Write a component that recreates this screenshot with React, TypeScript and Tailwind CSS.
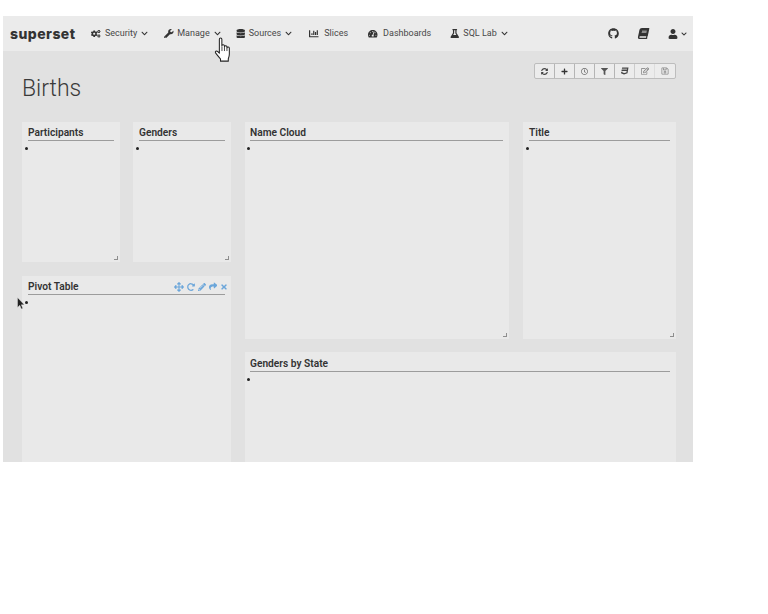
import React from 'react';
import {
  FaCogs, FaWrench, FaDatabase, FaChartBar, FaTachometerAlt, FaFlask, FaChevronDown, FaGithub, FaBook, FaUser,
  FaSyncAlt, FaPlus, FaRegClock, FaFilter, FaCss3, FaRegEdit, FaRegSave, FaArrowsAlt, FaRedoAlt, FaPencilAlt, FaShare, FaTimes,
} from 'react-icons/fa';

const FONT = "font-['Roboto',sans-serif]";

function NavItem({ icon, label, caret, className, iconGap = 'mr-[4px]' }: { icon: React.ReactNode; label: string; caret?: boolean; className: string; iconGap?: string }) {
  return (
    <div className={`flex items-center text-[9px] text-[#484848] ${className}`}>
      <span className={`${iconGap} flex w-[10px] justify-center text-[#333] text-[9.5px]`}>{icon}</span>
      <span>{label}</span>
      {caret && <FaChevronDown className="ml-[4px] text-[7px] text-[#333]" />}
    </div>
  );
}

function Panel({ title, className, tools }: { title: string; className: string; tools?: boolean }) {
  return (
    <div className={`relative bg-[#e9e9e9] px-[6px] pt-[5px] ${className}`}>
      <div className="flex h-[14px] items-center justify-between border-b border-[#9c9c9c] pb-[1px]">
        <span className="text-[10.2px] font-semibold text-[#333] leading-none">{title}</span>
        {tools && (
          <div className="-mr-[3px] -mt-[1px] flex items-center gap-[3px] text-[9px] text-[#6ba6da]">
            <FaArrowsAlt className="text-[10px]" />
            <FaRedoAlt className="text-[8px]" />
            <FaPencilAlt className="text-[8px]" />
            <FaShare className="text-[8.5px]" />
            <FaTimes className="text-[8px]" />
          </div>
        )}
      </div>
      <div className="-ml-[3px] mt-[6px] h-[3px] w-[3px] rounded-full bg-[#222]" />
    </div>
  );
}

function Resize() {
  return <div className="absolute bottom-[2px] right-[2px] h-[4px] w-[4px] border-b border-r border-[#8e8e8e]" />;
}

const TOOLS = [
  <FaSyncAlt className="text-[7px] text-[#444]" />,
  <FaPlus className="text-[7px] text-[#333]" />,
  <FaRegClock className="text-[7px] text-[#666]" />,
  <FaFilter className="text-[7px] text-[#555]" />,
  <FaCss3 className="text-[8px] text-[#444]" />,
  <FaRegEdit className="text-[8px] text-[#777]" />,
  <FaRegSave className="text-[8px] text-[#888]" />,
];

export default function App() {
  return (
    <div className={`relative h-[614px] w-[768px] overflow-hidden bg-white pl-[3px] pt-[16px] ${FONT}`}>
      <div className="h-[446px] w-[690px] overflow-hidden bg-[#e1e1e1]">
        {/* navbar */}
        <div className="flex h-[35px] items-center bg-[#ebebeb]">
          <span className="ml-[7px] w-[65px] font-['Inter',sans-serif] text-[14px] font-extrabold tracking-[0.45px] text-[#333]">superset</span>
          <NavItem className="ml-[16px]" icon={<FaCogs />} label="Security" caret />
          <NavItem className="ml-[16px]" iconGap="mr-[3px]" icon={<FaWrench />} label="Manage" caret />
          <NavItem className="ml-[15px]" iconGap="mr-[3px]" icon={<FaDatabase />} label="Sources" caret />
          <NavItem className="ml-[17px]" iconGap="mr-[5px]" icon={<FaChartBar />} label="Slices" />
          <NavItem className="ml-[20px]" iconGap="mr-[5px]" icon={<FaTachometerAlt />} label="Dashboards" />
          <NavItem className="ml-[18px]" icon={<FaFlask />} label="SQL Lab" caret />
          <div className="ml-auto mr-[6px] flex items-center text-[#333]">
            <FaGithub className="text-[11px]" />
            <FaBook className="ml-[19px] -skew-x-12 text-[11px]" />
            <FaUser className="ml-[19px] text-[10px]" />
            <FaChevronDown className="ml-[3px] text-[6px]" />
          </div>
        </div>

        <div className="px-[19px]">
          {/* title + toolbar */}
          <div className="flex h-[71px] items-start justify-between">
            <h1 className="mt-[26px] text-[23px] font-light leading-none text-[#3a3a3a]">Births</h1>
            <div className="mr-[-2px] mt-[12px] flex h-[16px] items-stretch rounded-[2px] border border-[#bdbdbd] bg-[#ececec]">
              {TOOLS.map((t, i) => (
                <div key={i} className={`flex w-[20px] items-center justify-center ${i < 4 ? 'border-r border-[#b5b5b5]' : i === 4 ? 'border-r border-[#cccccc]' : i === 5 ? 'border-r border-[#dddddd]' : ''}`}>
                  {t}
                </div>
              ))}
            </div>
          </div>

          {/* dashboard grid */}
          <div className="flex gap-[14px]">
            <div className="w-[209px] shrink-0">
              <div className="flex gap-[13px]">
                <Panel title="Participants" className="h-[140px] w-[98px]" />
                <Panel title="Genders" className="h-[140px] w-[98px]" />
              </div>
              <div className="relative mt-[14px]">
                <Panel title="Pivot Table" className="h-[200px]" tools />
              </div>
            </div>
            <div className="w-[431px] shrink-0">
              <div className="flex gap-[14px]">
                <div className="relative w-[264px]">
                  <Panel title="Name Cloud" className="h-[217px] !pl-[5px]" />
                  <Resize />
                </div>
                <div className="relative w-[153px]">
                  <Panel title="Title" className="h-[217px]" />
                  <Resize />
                </div>
              </div>
              <Panel title="Genders by State" className="mt-[13px] h-[120px] !pl-[5px] !pt-[6px]" />
            </div>
          </div>
        </div>
      </div>

      {/* resize handles of the small charts */}
      <div className="absolute left-[114px] top-[256px] h-[4px] w-[4px] border-b border-r border-[#8e8e8e]" />
      <div className="absolute left-[225px] top-[256px] h-[4px] w-[4px] border-b border-r border-[#8e8e8e]" />

      {/* hand cursor */}
      <svg className="absolute left-[213px] top-[37px]" width="20" height="26" viewBox="0 0 18 25">
        <path d="M5.5 2.2c0-1.6 2.4-1.6 2.4 0v6.2c.3-1.2 2.4-1.2 2.5.2v.6c.3-1.1 2.3-1 2.4.3v.8c.4-1 2.3-.8 2.3.6v5.5c0 2.2-.5 3.2-1 4.5v2.3H6.6v-2c-1-1.2-2.3-2.7-4.6-5.7-1.1-1.5.7-2.8 2-1.5l1.5 1.6V2.2z" fill="#fff" stroke="#222" strokeWidth="1" strokeLinejoin="round" />
        <path d="M8 9v4.5M10.4 9.5v4M12.8 10.5v3" stroke="#222" strokeWidth="0.8" fill="none" />
      </svg>

      {/* arrow cursor */}
      <svg className="absolute left-[17px] top-[297px]" width="8" height="13" viewBox="0 0 8 13">
        <path d="M0.5 0.5v10l2.3-2.2 1.5 3.6 1.5-.7-1.5-3.4h3z" fill="#222" stroke="#eee" strokeWidth="0.4" />
      </svg>
    </div>
  );
}
